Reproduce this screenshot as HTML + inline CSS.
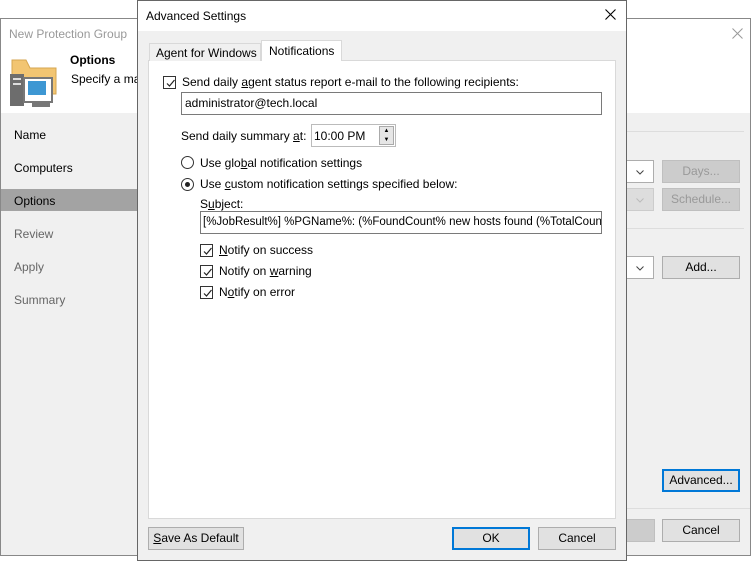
<!DOCTYPE html>
<html><head><meta charset="utf-8"><style>
*{box-sizing:border-box;margin:0;padding:0}
body{width:754px;height:561px;background:#fff;font-family:"Liberation Sans",sans-serif;font-size:12px;color:#000;position:relative;overflow:hidden}
.a{position:absolute;white-space:nowrap}
.btn{position:absolute;background:#e1e1e1;border:1px solid #adadad;text-align:center;line-height:20px}
.cb{position:absolute;width:13px;height:13px;border:1px solid #333;background:#fff}
.cb svg{position:absolute;left:1px;top:1px}
.rd{position:absolute;width:13px;height:13px;border:1px solid #333;border-radius:50%;background:#fff}
.dd{position:absolute;width:28px;height:23px;border:1px solid #adadad;border-left:0}
.dd svg{position:absolute;left:10px;top:9px}
u{text-decoration:underline}
</style></head><body>
<!-- main window -->
<div class="a" style="left:0;top:18px;width:751px;height:538px;border:1px solid #888;background:#f0f0f0"></div>
<div class="a" style="left:1px;top:19px;width:749px;height:94px;background:#fff"></div>
<div class="a" style="left:9px;top:27px;color:#999">New Protection Group</div>
<svg class="a" style="left:732px;top:28px" width="11" height="11"><path d="M0.5 0.5L10.5 10.5M10.5 0.5L0.5 10.5" stroke="#999" stroke-width="1"/></svg>
<svg class="a" style="left:10px;top:58px" width="48" height="50">
<path d="M2 2h14l4 8h26v26H2z" fill="#f2c572" stroke="#d6a650"/>
<rect x="0" y="16" width="14" height="32" fill="#6d6d6d"/>
<rect x="3" y="20" width="8" height="2" fill="#ddd"/><rect x="3" y="25" width="8" height="2" fill="#ddd"/>
<rect x="14" y="20" width="28" height="24" fill="#fff" stroke="#777" stroke-width="2"/>
<rect x="18" y="23" width="18" height="14" fill="#3d97d3"/>
<rect x="22" y="44" width="18" height="5" fill="#777"/>
</svg>
<div class="a" style="left:70px;top:53px;font-weight:bold">Options</div>
<div class="a" style="left:71px;top:72px">Specify a ma</div>
<div class="a" style="left:1px;top:113px;width:136px;height:442px;background:#f0f0f0"></div>
<div class="a" style="left:1px;top:189px;width:136px;height:22px;background:#a3a3a3"></div>
<div class="a" style="left:14px;top:128px">Name</div>
<div class="a" style="left:14px;top:161px">Computers</div>
<div class="a" style="left:14px;top:194px">Options</div>
<div class="a" style="left:14px;top:227px;color:#666">Review</div>
<div class="a" style="left:14px;top:260px;color:#666">Apply</div>
<div class="a" style="left:14px;top:293px;color:#666">Summary</div>
<div class="a" style="left:626px;top:131px;width:118px;height:1px;background:#ddd"></div>
<div class="a" style="left:626px;top:228px;width:118px;height:1px;background:#ddd"></div>
<div class="dd" style="left:626px;top:160px;background:#fff"><svg width="8" height="5"><path d="M0.5 0.5L4 4L7.5 0.5" stroke="#444" fill="none"/></svg></div>
<div class="dd" style="left:626px;top:188px;background:#ddd;border-color:#ccc"><svg width="8" height="5"><path d="M0.5 0.5L4 4L7.5 0.5" stroke="#bbb" fill="none"/></svg></div>
<div class="dd" style="left:626px;top:256px;background:#fff"><svg width="8" height="5"><path d="M0.5 0.5L4 4L7.5 0.5" stroke="#444" fill="none"/></svg></div>
<div class="btn" style="left:662px;top:160px;width:78px;height:23px;background:#ccc;border-color:#bfbfbf;color:#999">Days...</div>
<div class="btn" style="left:662px;top:188px;width:78px;height:23px;background:#ccc;border-color:#bfbfbf;color:#999">Schedule...</div>
<div class="btn" style="left:662px;top:256px;width:78px;height:23px">Add...</div>
<div class="btn" style="left:662px;top:469px;width:78px;height:23px;border:2px solid #0078d7;line-height:19px">Advanced...</div>
<div class="a" style="left:626px;top:508px;width:124px;height:1px;background:#ddd"></div>
<div class="btn" style="left:600px;top:519px;width:55px;height:23px;background:#ccc;border-color:#bfbfbf"></div>
<div class="btn" style="left:662px;top:519px;width:78px;height:23px">Cancel</div>

<!-- dialog -->
<div class="a" style="left:137px;top:0;width:490px;height:561px;border:1px solid #666;background:#f0f0f0"></div>
<div class="a" style="left:138px;top:1px;width:488px;height:30px;background:#fff"></div>
<div class="a" style="left:146px;top:9px">Advanced Settings</div>
<svg class="a" style="left:605px;top:9px" width="11" height="11"><path d="M0.5 0.5L10.5 10.5M10.5 0.5L0.5 10.5" stroke="#000" stroke-width="1.1"/></svg>
<div class="a" style="left:148px;top:60px;width:468px;height:459px;background:#fff;border:1px solid #d9d9d9"></div>
<div class="a" style="left:149px;top:43px;width:112px;height:18px;background:#f0f0f0;border:1px solid #d9d9d9;border-bottom:0;padding:2px 0 0 6px">Agent for Windows</div>
<div class="a" style="left:261px;top:40px;width:81px;height:21px;background:#fff;border:1px solid #d9d9d9;border-bottom:0;padding:3px 0 0 7px">Notifications</div>

<div class="cb" style="left:163px;top:76px"><svg width="11" height="11"><path d="M2 5.5l2.5 2.5L9.5 2" stroke="#222" fill="none" stroke-width="1.2"/></svg></div>
<div class="a" style="left:182px;top:75px">Send daily <u>a</u>gent status report e-mail to the following recipients:</div>
<div class="a" style="left:181px;top:92px;width:421px;height:23px;border:1px solid #7a7a7a;padding:3px 0 0 3px">administrator@tech.local</div>
<div class="a" style="left:181px;top:129px">Send daily summary <u>a</u>t:</div>
<div class="a" style="left:311px;top:124px;width:85px;height:23px;border:1px solid #bbb;padding:4px 0 0 2px">10:00 PM</div>
<div class="a" style="left:379px;top:126px;width:15px;height:19px;border:1px solid #aaa;background:#e6e6e6;font-size:6px;line-height:9px;text-align:center">▲<br>▼</div>
<div class="rd" style="left:181px;top:156px"></div>
<div class="a" style="left:200px;top:156px">Use glo<u>b</u>al notification settings</div>
<div class="rd" style="left:181px;top:178px"><div style="position:absolute;left:3px;top:3px;width:5px;height:5px;border-radius:50%;background:#222"></div></div>
<div class="a" style="left:200px;top:177px">Use <u>c</u>ustom notification settings specified below:</div>
<div class="a" style="left:200px;top:197px">S<u>u</u>bject:</div>
<div class="a" style="left:200px;top:211px;width:402px;height:23px;border:1px solid #7a7a7a;padding:4px 0 0 2px;overflow:hidden;font-size:11.5px">[%JobResult%] %PGName%: (%FoundCount% new hosts found (%TotalCount%</div>
<div class="cb" style="left:200px;top:244px"><svg width="11" height="11"><path d="M2 5.5l2.5 2.5L9.5 2" stroke="#222" fill="none" stroke-width="1.2"/></svg></div>
<div class="a" style="left:219px;top:243px"><u>N</u>otify on success</div>
<div class="cb" style="left:200px;top:265px"><svg width="11" height="11"><path d="M2 5.5l2.5 2.5L9.5 2" stroke="#222" fill="none" stroke-width="1.2"/></svg></div>
<div class="a" style="left:219px;top:264px">Notify on <u>w</u>arning</div>
<div class="cb" style="left:200px;top:286px"><svg width="11" height="11"><path d="M2 5.5l2.5 2.5L9.5 2" stroke="#222" fill="none" stroke-width="1.2"/></svg></div>
<div class="a" style="left:219px;top:285px">N<u>o</u>tify on error</div>

<div class="btn" style="left:148px;top:527px;width:96px;height:23px"><u>S</u>ave As Default</div>
<div class="btn" style="left:452px;top:527px;width:78px;height:23px;border:2px solid #0078d7;line-height:19px">OK</div>
<div class="btn" style="left:538px;top:527px;width:78px;height:23px">Cancel</div>
</body></html>
